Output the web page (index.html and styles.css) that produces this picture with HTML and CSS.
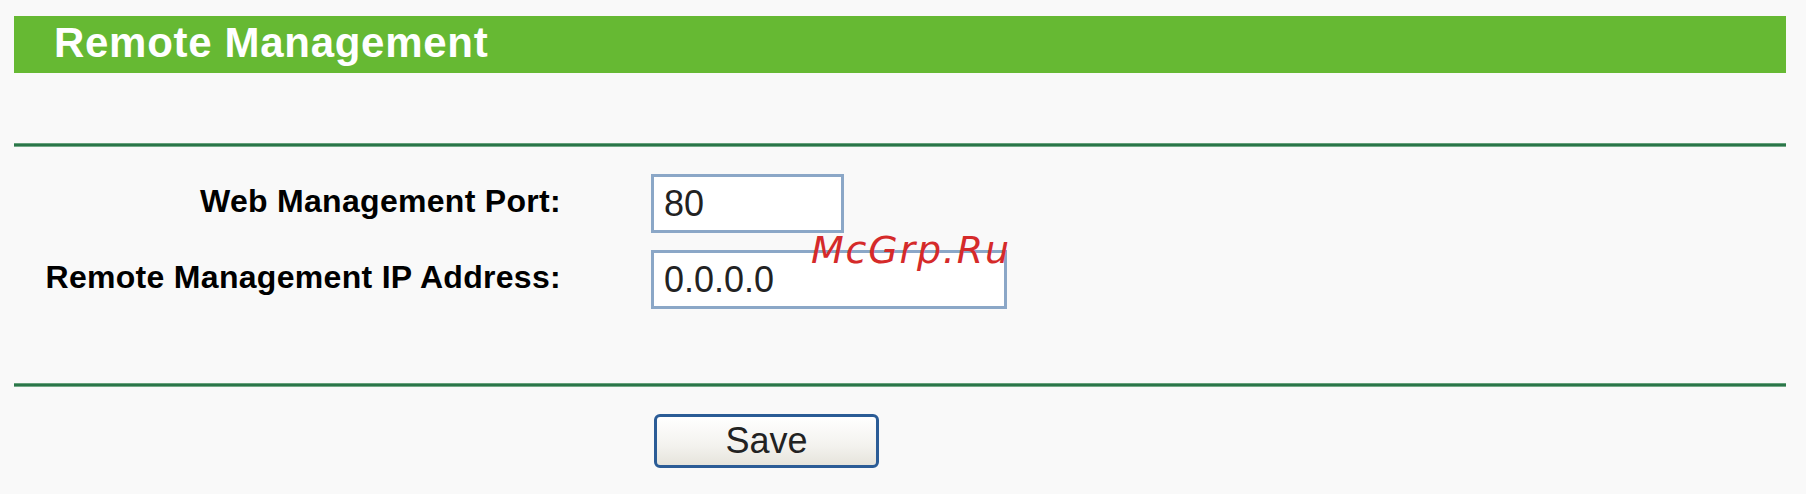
FILE: index.html
```html
<!DOCTYPE html>
<html lang="en">
<head>
<meta charset="utf-8">
<title>Remote Management</title>
<link rel="stylesheet" href="styles.css">
</head>
<body>
<div class="page">
  <div class="header"><h1 class="title">Remote Management</h1></div>
  <div class="rule"></div>
  <div class="form">
    <label class="label" for="port">Web Management Port:</label>
    <input class="field field-port" id="port" type="text" value="80">
    <label class="label" for="ip">Remote Management IP Address:</label>
    <input class="field field-ip" id="ip" type="text" value="0.0.0.0">
  </div>
  <div class="rule"></div>
  <div class="actions"><button class="btn" type="button">Save</button></div>
  <div class="watermark">McGrp.Ru</div>
</div>
</body>
</html>
```
FILE: styles.css
```css
html, body {
  margin: 0;
  padding: 0;
  background: #f9f9f9;
}
body {
  font-family: "Liberation Sans", Arial, sans-serif;
  color: #000;
}
.page {
  position: relative;
  padding: 16px 20px 0 14px;
  height: 494px;
  box-sizing: border-box;
}
.header {
  height: 57px;
  background: #66b933;
  display: flex;
  align-items: center;
  padding-left: 40px;
}
.title {
  margin: 0;
  padding-bottom: 3px;
  color: #fff;
  font-size: 42px;
  font-weight: bold;
  letter-spacing: 0.7px;
  line-height: 1;
}
.rule {
  height: 4px;
  margin-top: 70px;
  background: linear-gradient(#8fbf9f, #2b7649 30%, #2b7649 70%, #a9cfb6);
}
.form {
  margin-top: 27px;
  display: grid;
  grid-template-columns: 547px auto;
  column-gap: 90px;
  row-gap: 17px;
  align-items: center;
  justify-items: start;
}
.form + .rule {
  margin-top: 74px;
}
.label {
  justify-self: end;
  text-align: right;
  font-size: 32px;
  font-weight: bold;
  letter-spacing: 0.3px;
  line-height: 1;
  padding-bottom: 6px;
}
.field {
  box-sizing: border-box;
  height: 59px;
  border: 3px solid #8ba7c7;
  background: #fff;
  padding: 0 10px;
  font-family: "Liberation Sans", Arial, sans-serif;
  font-size: 36px;
  color: #222;
  outline: none;
  margin: 0;
}
.field-port { width: 193px; }
.field-ip { width: 356px; }
.actions {
  padding-top: 27px;
  padding-left: 640px;
}
.btn {
  box-sizing: border-box;
  width: 225px;
  height: 54px;
  border: 3px solid #2b5c96;
  border-radius: 6px;
  background: linear-gradient(#ffffff, #f3f2ee 60%, #e6e4dc);
  font-family: "Liberation Sans", Arial, sans-serif;
  font-size: 36px;
  color: #222;
  padding: 0;
  margin: 0;
}
.watermark {
  position: absolute;
  left: 811px;
  top: 231px;
  font-family: "DejaVu Sans", sans-serif;
  font-style: oblique;
  font-size: 38px;
  letter-spacing: 1.8px;
  line-height: 1;
  color: #d52a2a;
}
```
